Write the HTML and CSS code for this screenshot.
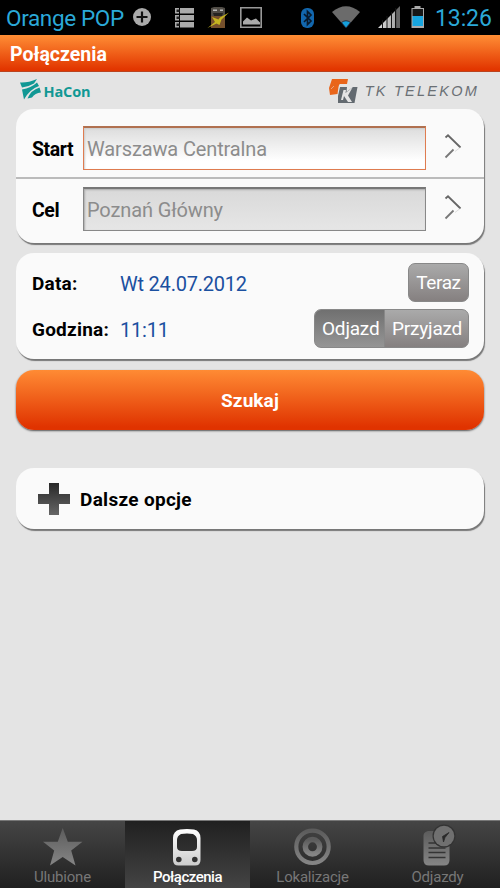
FILE: index.html
```html
<!DOCTYPE html>
<html lang="pl">
<head>
<meta charset="utf-8">
<title>Połączenia</title>
<link rel="stylesheet" href="styles.css">
</head>
<body>
<div class="status">
  <span class="carrier">Orange POP</span>
  <svg class="status-icons" width="300" height="35" viewBox="130 0 300 35">
    <defs><linearGradient id="sig"><stop offset="0" stop-color="#ddd"/><stop offset="1" stop-color="#aaa"/></linearGradient></defs>
    <circle cx="142" cy="17" r="9" fill="#aaa"/>
    <path d="M142 11.500V22.500M136.500 17H147.500" stroke="#111" stroke-width="2.200"/>
    <path d="M175 8h4v5.500h-4zM180 8h14v5.500h-14zM175 15h4v5.500h-4zM180 15h14v5.500h-14zM175 22h4v5.500h-4zM180 22h14v5.500h-14z" fill="#aaa"/>
    <path d="M176.500 9.500h3v2.500h-3zM176.500 16.500h3v2.500h-3zM176.500 23.500h3v2.500h-3z" fill="#222"/>
    <path d="M211 14h14v14h-14z" fill="#76502c"/>
    <path d="M211 8l3-1h8l3 1v8h-14z" fill="#504c46"/>
    <path d="M213 9.500h4v1.500h-4zM220 9.500h3v1.500h-3z" fill="#bbb"/>
    <path d="M213 13h10l-1 3h-8z" fill="#252321"/>
    <path d="M229 12.500L220 17.500L218.500 19.500L212 17L215 22L207.500 28L216.500 23.500L219.500 25L221.500 19.500z" fill="#c5b420"/>
    <path d="M240.800 7.800h20.400v19.400h-20.400z" fill="none" stroke="#999" stroke-width="1.600"/>
    <path d="M243 24.500v-3l4-4 4 3 5-2 4 4v2z" fill="#aaa"/>
    <rect x="301" y="8" width="13" height="20" rx="6" fill="#1267ae"/>
    <path d="M304 14l7 7-3.500 3.500v-13l3.500 3.500-7 7" fill="none" stroke="#07192c" stroke-width="1.700"/>
    <path d="M332 12Q346 .5 360 12L346 28z" fill="#6b6b6b"/>
    <path d="M341.500 22.500Q346 19 350.500 22.500L346 28z" fill="#159fda" stroke="#112" stroke-width=".7"/>
    <path d="M378 28L395 11V28z" fill="url(#sig)"/>
    <path d="M396 10l4-4v22h-4z" fill="#666"/>
    <path d="M382.500 20v8M387 16v12M391.500 12v16M395.700 8v20" stroke="#151515"/>
    <path d="M411.500 8h3V6h6v2h3.500v20h-12.500z" fill="#aaa"/><path d="M412.500 9h10.500v7h-10.500z" fill="#171717"/><path d="M412.500 16h10.500v10h-10.500z" fill="#18a5df"/>
  </svg>
  <span class="clock">13:26</span>
</div>
<header class="title"><h1>Połączenia</h1></header>
<div class="brands">
  <div class="hacon">
    <svg width="22" height="22" viewBox="0 0 22 22" fill="#119894"><path d="M0 3.500Q8 4 17 0L14 4.500Q8 8 2 8.500z"/><path d="M2 10.500Q11 9 17 3.500L19 7Q10 10 4 20.500z"/><path d="M7.500 19.500Q11 11 19.500 8.500L21 13.500Q15 14 12 18.500z"/></svg>
    <span>HaCon</span>
  </div>
  <div class="telekom">
    <svg width="31" height="25" viewBox="0 0 31 25"><path d="M4 0H20L19 5H12Q11 5 10.500 8L9.500 15L2 16L1 9z" fill="#e9651a"/><path d="M3 10L6 7" stroke="#e4e4e4" stroke-width=".5"/><path d="M12 8H19L18.500 13 25 8H29.500L26.500 24H10L10 17z" fill="#636a70"/><path d="M17.500 14L24.500 8.500L20 16.500L24 23H20L16 17L15 21H13L15.500 11H18z" fill="#e4e4e4"/></svg>
    <span>TK TELEKOM</span>
  </div>
</div>
<main>
  <section class="card route">
    <div class="row"><label class="label">Start</label><div class="field active"><span>Warszawa Centralna</span></div>
      <svg class="chev" width="20" height="26" viewBox="0 0 20 26"><path d="M2.500 4.500L5 2.300 17.500 14.500" fill="none" stroke="#666" stroke-width="1.800"/><path d="M2.500 24.500L10.500 16.500" stroke="#777" stroke-width="1.800"/><path d="M12 18.500L16.500 15" stroke="#ddd"/></svg></div>
    <div class="row"><label class="label">Cel</label><div class="field"><span>Poznań Główny</span></div>
      <svg class="chev" width="20" height="26" viewBox="0 0 20 26"><path d="M2.500 4.500L5 2.300 17.500 14.500" fill="none" stroke="#666" stroke-width="1.800"/><path d="M2.500 24.500L10.500 16.500" stroke="#777" stroke-width="1.800"/><path d="M12 18.500L16.500 15" stroke="#ddd"/></svg></div>
  </section>
  <section class="card when">
    <div class="line"><span class="label godz">Data:</span><span class="value">Wt 24.07.2012</span><div class="now"><span>Teraz</span></div></div>
    <div class="line"><span class="label godz">Godzina:</span><span class="value">11:11</span><div class="toggle"><div class="on"><span>Odjazd</span></div><div><span>Przyjazd</span></div></div></div>
  </section>
  <div class="search"><span>Szukaj</span></div>
  <section class="card more">
    <svg width="32" height="32" viewBox="0 0 32 32"><defs><linearGradient id="pl" x2="0" y2="1"><stop offset="0" stop-color="#282828"/><stop offset="1" stop-color="#666"/></linearGradient></defs><path d="M11 0h10v11h11v10H21v11H11V21H0V11h11z" fill="url(#pl)"/></svg>
    <span class="label opts">Dalsze opcje</span>
  </section>
</main>
<nav>
  <div class="tab">
    <svg width="44" height="45" viewBox="0 0 44 45"><defs><linearGradient id="g" x2="0" y2="1"><stop offset="0" stop-color="#5c5c5c"/><stop offset="1" stop-color="#858585"/></linearGradient></defs><path d="M21.700 7L26.800 20.700H41.500L30.200 29.500 34.500 44.500 21.700 36 9 44.500 13.200 29.500 2 20.700H16.800z" fill="url(#g)"/></svg>
    <span>Ulubione</span></div>
  <div class="tab sel">
    <svg width="44" height="45" viewBox="0 0 44 45"><defs><linearGradient id="w" x2="0" y2="1"><stop offset="0" stop-color="#fff"/><stop offset="1" stop-color="#ccc"/></linearGradient></defs><path fill-rule="evenodd" d="M14 8.500Q21 7.500 28 8.500Q34.500 10 34.500 17V39Q34.500 44.500 29 44.500H12.500Q7 44.500 7 39V17Q7 10 14 8.500zM15 13Q11 15 11 19V26Q11 30 16 30H26Q31 30 31 26V19Q31 15 27 13Q21 12 15 13z" fill="url(#w)"/><circle cx="12.800" cy="38.500" r="2.800" fill="#333"/><circle cx="28.800" cy="38.500" r="2.800" fill="#333"/></svg>
    <span class="pol">Połączenia</span></div>
  <div class="tab">
    <svg width="44" height="45" viewBox="0 0 44 45" fill="none" stroke="url(#g)"><circle cx="21.500" cy="25.800" r="16.200" stroke-width="4.200"/><circle cx="21.500" cy="25.800" r="7.200" stroke-width="5.500"/></svg>
    <span>Lokalizacje</span></div>
  <div class="tab">
    <svg width="44" height="45" viewBox="0 0 44 45"><path d="M12 10H28L33.500 16V39Q33.500 44.500 28 44.500H13Q7.500 44.500 7.500 39V14.500Q7.500 11 12 10z" fill="url(#g)"/><path d="M12.500 22h8M12.500 27h17M12.500 31.500h17M12.500 36.500h17" stroke="#343434" stroke-width="1.600"/><circle cx="28" cy="15" r="11.500" fill="#333"/><circle cx="28" cy="15" r="10.300" fill="#707070"/><path d="M27.500 21L26.500 15.500 33 11.500 29 16.500z" fill="#292929" stroke="#292929" stroke-width=".8"/></svg>
    <span>Odjazdy</span></div>
</nav>
</body>
</html>
```
FILE: styles.css
```css
* { box-sizing: border-box; }
body { margin: 0; width: 500px; height: 888px; display: flex; flex-direction: column; overflow: hidden; background: #e4e4e4; font-family: Roboto, "Liberation Sans", sans-serif; font-size: 19px; line-height: 24px; white-space: nowrap; }
.status { height: 35px; flex: none; background: #000; display: flex; align-items: center; color: #2ba9d8; padding-left: 6px; }
.carrier { width: 124px; font-size: 22.5px; letter-spacing: -.35px; }
.status-icons { flex: none; }
.clock { font-size: 23px; letter-spacing: -.1px; margin-left: 5px; padding-top: 2px; }
.title { height: 37px; flex: none; background: linear-gradient(#ff8e35, #e23600 95%); border-bottom: 1px solid #bb4420; padding: 8px 10px; }
h1 { margin: 0; color: #fff; font-size: 19.5px; line-height: 24px; font-weight: 700; }
.brands { height: 37px; flex: none; display: flex; justify-content: space-between; padding: 7px 21px 0 20px; }
.hacon, .telekom { display: flex; }
.hacon span { color: #119894; font: 700 14.5px/25px "Open Sans", sans-serif; margin-left: 1.5px; letter-spacing: -.15px; }
.telekom span { color: #6b7075; font: italic 14.5px/25px "Liberation Sans", sans-serif; margin-left: 6px; letter-spacing: 2.25px; }
main { flex: 1; padding: 0 16px; }
.card { background: #fafafa; border-radius: 18px; box-shadow: 1px 2px 1px #777; }
.label { font-weight: 700; color: #000; }
.route { height: 134px; }
.row { height: 70px; display: flex; padding: 17px 0 0 16px; border-bottom: 2px solid #bbb; }
.row + .row { height: 64px; padding-top: 8px; border: 0; }
.row .label { width: 51px; padding-top: 12px; font-size: 19.5px; letter-spacing: -.4px; }
.field { width: 343px; height: 44px; border: 1px solid #888; border-top: 2px solid #777; background: linear-gradient(#d9d9d9, #e6e6e6); color: #8c8c8c; font-size: 20px; letter-spacing: -.13px; padding: 9px 3px; box-shadow: inset 1px 1px 2px #aaa; }
.field.active { border-color: #b0704f #df7c50 #df7c50; background: linear-gradient(#ddd, #fff 80%); box-shadow: inset 1px 1px 2px #ccc; }
.chev { margin: 7px 0 0 17px; }
.when { height: 106px; margin-top: 10px; padding: 9px 15px 0 16px; }
.line { display: flex; height: 46px; }
.line > span { padding-top: 10px; }
.line .label { width: 88px; letter-spacing: .22px; }
.value { color: #1b50a0; font-size: 20px; letter-spacing: -.22px; }
.now, .toggle { height: 39px; margin-left: auto; margin-top: 1px; border-radius: 7px; color: #fff; border: 1px solid #888; background: linear-gradient(#aaa, #858080); letter-spacing: -.2px; }
.now { width: 61px; text-align: center; padding-top: 7px; letter-spacing: -.4px; }
.toggle { width: 155px; display: flex; overflow: hidden; }
.toggle div { flex: 1; padding: 7px 0 0 7px; }
.toggle .on { flex: 0 0 70px; background: linear-gradient(#707070, #959595); border-right: 1px solid #888; }
.search { height: 60px; margin-top: 11px; border-radius: 18px; background: linear-gradient(#ff8b34, #e03300 95%); color: #fff; font-weight: 700; text-align: center; line-height: 61px; letter-spacing: .1px; box-shadow: 0 1px 2px #555; }
.more { height: 61px; margin-top: 38px; display: flex; align-items: center; padding-left: 22px; }
.opts { margin-left: 10px; padding-top: 2px; letter-spacing: .3px; }
nav { height: 68px; flex: none; display: grid; grid-template-columns: repeat(4, 125px); background: linear-gradient(#454545, #202020); border-top: 1px solid #777; }
.tab { display: flex; flex-direction: column; align-items: center; color: #777; font-size: 15px; line-height: 22px; letter-spacing: -.2px; }
.tab svg { height: 45px; width: 44px; flex: none; }
.sel { background: linear-gradient(#202020, #444); color: #fff; }
.pol { font-weight: 500; letter-spacing: -.5px; }
```
